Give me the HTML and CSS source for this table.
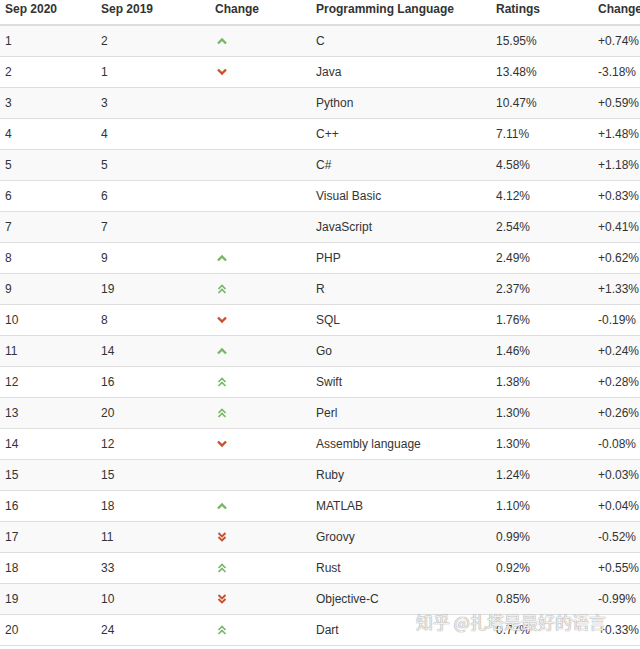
FILE: index.html
```html
<!DOCTYPE html>
<html lang="en">
<head>
<meta charset="utf-8">
<title>TIOBE Index September 2020</title>
<link rel="stylesheet" href="styles.css">
</head>
<body>
<div class="wrap">
<svg width="0" height="0" class="defs">
  <defs>
    <symbol id="up" viewBox="0 0 12 12"><path d="M2 8.5 L6 4.5 L10 8.5" fill="none" stroke="currentColor" stroke-width="2.4"/></symbol>
    <symbol id="down" viewBox="0 0 12 12"><path d="M2 3.5 L6 7.5 L10 3.5" fill="none" stroke="currentColor" stroke-width="2.4"/></symbol>
    <symbol id="up2" viewBox="0 0 12 12"><path d="M2.5 6 L6 2.5 L9.5 6 M2.5 10 L6 6.5 L9.5 10" fill="none" stroke="currentColor" stroke-width="1.7"/></symbol>
    <symbol id="down2" viewBox="0 0 12 12"><path d="M2.5 2 L6 5.5 L9.5 2 M2.5 6 L6 9.5 L9.5 6" fill="none" stroke="currentColor" stroke-width="1.9"/></symbol>
  </defs>
</svg>
<table class="tbl">
  <colgroup>
    <col class="c1"><col class="c2"><col class="c3"><col class="c4"><col class="c5"><col class="c6">
  </colgroup>
  <thead>
    <tr><th>Sep 2020</th><th>Sep 2019</th><th>Change</th><th>Programming Language</th><th>Ratings</th><th>Change</th></tr>
  </thead>
  <tbody>
    <tr><td>1</td><td>2</td><td><svg class="ic up"><use href="#up"/></svg></td><td>C</td><td>15.95%</td><td>+0.74%</td></tr>
    <tr><td>2</td><td>1</td><td><svg class="ic dn"><use href="#down"/></svg></td><td>Java</td><td>13.48%</td><td>-3.18%</td></tr>
    <tr><td>3</td><td>3</td><td></td><td>Python</td><td>10.47%</td><td>+0.59%</td></tr>
    <tr><td>4</td><td>4</td><td></td><td>C++</td><td>7.11%</td><td>+1.48%</td></tr>
    <tr><td>5</td><td>5</td><td></td><td>C#</td><td>4.58%</td><td>+1.18%</td></tr>
    <tr><td>6</td><td>6</td><td></td><td>Visual Basic</td><td>4.12%</td><td>+0.83%</td></tr>
    <tr><td>7</td><td>7</td><td></td><td>JavaScript</td><td>2.54%</td><td>+0.41%</td></tr>
    <tr><td>8</td><td>9</td><td><svg class="ic up"><use href="#up"/></svg></td><td>PHP</td><td>2.49%</td><td>+0.62%</td></tr>
    <tr><td>9</td><td>19</td><td><svg class="ic up"><use href="#up2"/></svg></td><td>R</td><td>2.37%</td><td>+1.33%</td></tr>
    <tr><td>10</td><td>8</td><td><svg class="ic dn"><use href="#down"/></svg></td><td>SQL</td><td>1.76%</td><td>-0.19%</td></tr>
    <tr><td>11</td><td>14</td><td><svg class="ic up"><use href="#up"/></svg></td><td>Go</td><td>1.46%</td><td>+0.24%</td></tr>
    <tr><td>12</td><td>16</td><td><svg class="ic up"><use href="#up2"/></svg></td><td>Swift</td><td>1.38%</td><td>+0.28%</td></tr>
    <tr><td>13</td><td>20</td><td><svg class="ic up"><use href="#up2"/></svg></td><td>Perl</td><td>1.30%</td><td>+0.26%</td></tr>
    <tr><td>14</td><td>12</td><td><svg class="ic dn"><use href="#down"/></svg></td><td>Assembly language</td><td>1.30%</td><td>-0.08%</td></tr>
    <tr><td>15</td><td>15</td><td></td><td>Ruby</td><td>1.24%</td><td>+0.03%</td></tr>
    <tr><td>16</td><td>18</td><td><svg class="ic up"><use href="#up"/></svg></td><td>MATLAB</td><td>1.10%</td><td>+0.04%</td></tr>
    <tr><td>17</td><td>11</td><td><svg class="ic dn"><use href="#down2"/></svg></td><td>Groovy</td><td>0.99%</td><td>-0.52%</td></tr>
    <tr><td>18</td><td>33</td><td><svg class="ic up"><use href="#up2"/></svg></td><td>Rust</td><td>0.92%</td><td>+0.55%</td></tr>
    <tr><td>19</td><td>10</td><td><svg class="ic dn"><use href="#down2"/></svg></td><td>Objective-C</td><td>0.85%</td><td>-0.99%</td></tr>
    <tr><td>20</td><td>24</td><td><svg class="ic up"><use href="#up2"/></svg></td><td>Dart</td><td>0.77%</td><td>+0.33%</td></tr>
  </tbody>
</table>
<div class="watermark">知乎 @扎塔是最好的语言</div>
</div>
</body>
</html>
```
FILE: styles.css
```css
html, body {
  margin: 0;
  padding: 0;
  background: #fff;
  overflow: hidden;
}
.wrap {
  position: relative;
  width: 640px;
  height: 649px;
  overflow: hidden;
}
.defs {
  position: absolute;
  width: 0;
  height: 0;
}
.tbl {
  border-collapse: collapse;
  table-layout: fixed;
  width: 660px;
  font-family: "Liberation Sans", Arial, sans-serif;
  font-size: 12px;
  color: #333;
}
.c1 { width: 96px; }
.c2 { width: 114px; }
.c3 { width: 101px; }
.c4 { width: 180px; }
.c5 { width: 102px; }
.c6 { width: 67px; }
.tbl th {
  text-align: left;
  font-weight: bold;
  padding: 1px 5px 0 5px;
  height: 23px;
  line-height: 17px;
  vertical-align: top;
  white-space: nowrap;
  border-bottom: 2px solid #ddd;
}
.tbl td {
  padding: 0 5px;
  height: 30px;
  line-height: 17px;
  vertical-align: middle;
  border-top: 1px solid #ddd;
  white-space: nowrap;
}
.tbl tbody tr:first-child td { border-top: 0; height: 30px; }
.tbl tbody tr:last-child td { border-bottom: 1px solid #ddd; }
.tbl tbody tr:nth-child(odd) td { background: #f9f9f9; }
.ic {
  display: block;
  width: 12px;
  height: 12px;
  margin-left: 1px;
}
.up { color: #77b866; }
.dn { color: #c9502b; }
.watermark {
  position: absolute;
  left: 416px;
  top: 611px;
  font-family: "Noto Sans CJK SC", sans-serif;
  font-size: 17px;
  line-height: 22px;
  color: rgba(255, 255, 255, 0.85);
  text-shadow: 0 0 1px #999, 0 0 1px #999;
  letter-spacing: 0;
  white-space: nowrap;
}
```
